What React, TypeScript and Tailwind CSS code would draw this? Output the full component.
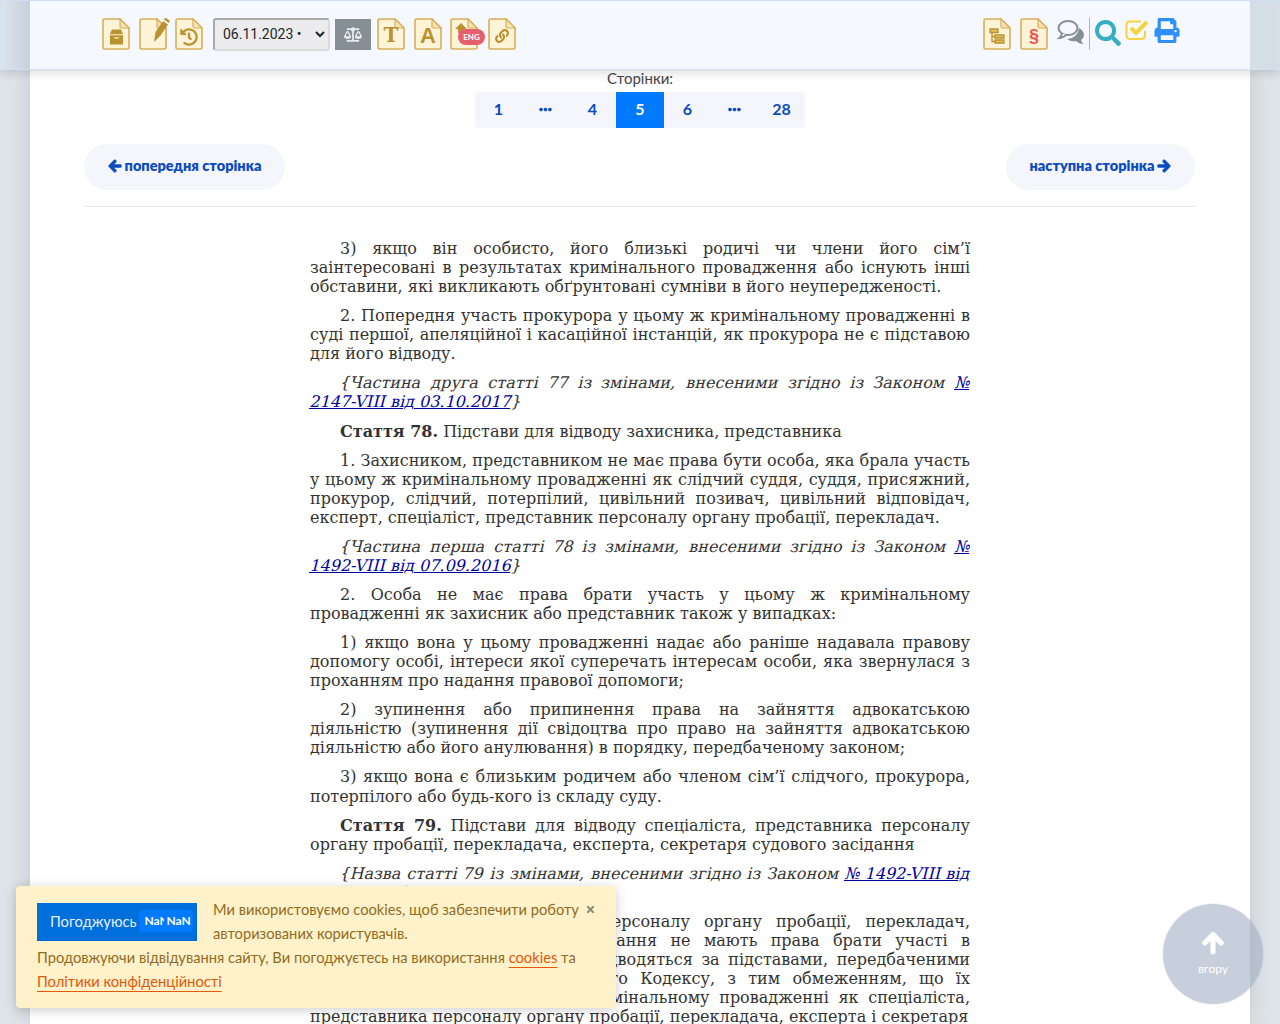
import { Fragment } from "react"
import type { ReactNode } from "react"
import {
  FaArrowLeft,
  FaArrowRight,
  FaArrowUp,
  FaBalanceScale,
  FaEllipsisH,
  FaHistory,
  FaLink,
  FaPrint,
  FaSearch,
  FaTimes,
} from "react-icons/fa"

const pages = ["1", "dots", "4", "5", "6", "dots", "28"]

function DocIcon({ children }: { children?: ReactNode }) {
  return (
    <div className="relative h-[32px] w-[28px] shrink-0">
      <svg viewBox="0 0 28 32" className="absolute inset-0 h-full w-full">
        <path
          d="M1 2.5 Q1 1 2.5 1 H18 L27 10 V29.5 Q27 31 25.5 31 H2.5 Q1 31 1 29.5 Z"
          fill="#fff4d8"
          stroke="#d8ae5b"
          strokeWidth="1.6"
        />
        <path d="M18 1 V8.5 Q18 10 19.5 10 H27 Z" fill="#f6e2b0" stroke="#d8ae5b" strokeWidth="1.2" />
      </svg>
      <div className="absolute inset-0 flex items-center justify-center text-[#bb9230]">{children}</div>
    </div>
  )
}

function Para({ children }: { children: ReactNode }) {
  return <p className="mb-[10px] indent-[30px] text-justify">{children}</p>
}

// the amendment notes use the upright face slanted, words stay separate so justify still works
function Amend({ text, links }: { text: string; links: string[] }) {
  return (
    <p className="mb-[10px] indent-[30px] text-justify">
      {text.split(" ").map((word, i) => (
        <Fragment key={i}>
          <span className="inline-block origin-[50%_65%] skew-x-[-14deg] indent-0">{word}</span>{" "}
        </Fragment>
      ))}
      {links.map((link, i) => (
        <Fragment key={i}>
          <span className="inline-block origin-[50%_65%] skew-x-[-14deg] indent-0 text-[#0000a0] underline">{link}</span>
          {i < links.length - 1 ? " " : ""}
        </Fragment>
      ))}
      <span className="inline-block origin-[50%_65%] skew-x-[-14deg] indent-0">{"}"}</span>
    </p>
  )
}

export default function App() {
  return (
    <div className="relative h-[1024px] overflow-hidden bg-[#dfe4e9] font-['Lato',sans-serif]">
      <header className="relative z-10 flex h-[70px] border border-[#cfe0f7] bg-[#d5dde6] shadow-[0_3px_10px_rgba(0,0,0,0.15)]">
        <div className="w-[29px] bg-gradient-to-r from-[#dde4ec] to-[#c6d1dc]" />
        <div className="flex flex-1 items-center justify-between bg-[#f5f8fe] pb-[2px] pl-[72px] pr-[70px]">
          <div className="flex items-center">
            <DocIcon>
              <svg viewBox="0 0 16 16" className="mt-[6px] h-[16px] w-[15px]" fill="currentColor">
                <path d="M3 0 H13 L15 5 H1 Z" />
                <path d="M1 6 H15 V16 H1 Z M5 8.5 Q8 11.5 11 8.5 L10 8 Q8 9.7 6 8 Z" fillRule="evenodd" />
              </svg>
            </DocIcon>
            <div className="relative ml-[9px]">
              <DocIcon />
              <svg viewBox="0 0 16 24" className="absolute left-[15px] top-0 h-[24px] w-[16px] text-[#bb9230]" fill="currentColor">
                <path d="M0 24 L1.5 14 L9 3 L14 6.5 L6.5 17.5 Z" />
                <path d="M10 1.5 L11 0 Q11.500 -0.300 12 0 L15.500 2.500 Q16 3 15.500 3.500 L14.800 5 Z" />
              </svg>
            </div>
            <div className="ml-[8px]">
              <DocIcon>
                <FaHistory className="mt-[6px] h-[18px] w-[18px]" />
              </DocIcon>
            </div>
            <select
              defaultValue="06.11.2023"
              className="ml-[10px] h-[33px] w-[117px] rounded-[3px] border-2 border-t-[#a9a9a9] border-l-[#a9a9a9] border-r-[#dcdcdc] border-b-[#dcdcdc] bg-[#ececef] pl-[4px] font-['Roboto',sans-serif] text-[14px] text-[#212529]"
            >
              <option value="06.11.2023">06.11.2023 •</option>
            </select>
            <div className="ml-[5px] flex h-[31px] w-[36px] items-center justify-center bg-[#868e96] text-[#e9ecef]">
              <FaBalanceScale className="h-[15px] w-[18px]" />
            </div>
            <div className="ml-[6px]">
              <DocIcon>
                <span className="mt-[2px] font-['DejaVu_Serif',serif] text-[20px] font-bold">T</span>
              </DocIcon>
            </div>
            <div className="ml-[9px]">
              <DocIcon>
                <span className="mt-[2px] font-['Liberation_Sans',sans-serif] text-[22px] font-bold">A</span>
              </DocIcon>
            </div>
            <div className="relative ml-[8px]">
              <DocIcon />
              <svg viewBox="0 0 12 10" className="absolute left-[5px] top-[5px] h-[10px] w-[12px] text-[#bb9230]" fill="currentColor">
                <path d="M6 0 L12 6 H9 V10 H3 V6 H0 Z" />
              </svg>
              <span className="absolute left-[8px] top-[11px] flex h-[16px] w-[27px] items-center justify-center rounded-full bg-[#e4606d] text-[8px] font-bold text-white">
                ENG
              </span>
            </div>
            <div className="ml-[10px]">
              <DocIcon>
                <FaLink className="mt-[3px] h-[14px] w-[14px]" />
              </DocIcon>
            </div>
          </div>
          <div className="flex items-center">
            <DocIcon>
              <svg viewBox="0 0 16 16" className="mt-[4px] h-[16px] w-[16px]" fill="#e3c163" stroke="currentColor" strokeWidth="1.300">
                <path d="M3 4.500 V13.500 H6 M3 8.500 H6" fill="none" />
                <path d="M1 1 H9 V4.500 H1 Z M6 7 H15 V10 H6 Z M6 12 H15 V15 H6 Z" />
              </svg>
            </DocIcon>
            <div className="ml-[9px]">
              <DocIcon>
                <span className="mt-[5px] font-['Liberation_Sans',sans-serif] text-[18px] font-bold text-[#f0524f]">§</span>
              </DocIcon>
            </div>
            <svg viewBox="0 0 28 26" className="mb-[4px] ml-[9px] h-[26px] w-[28px]">
              <path d="M22 9 Q27 12 27 16 Q27 19 24 21 Q25 24 27 25 Q22 25 19 22 Q14 23 10 20 Q20 20 22 9 Z" fill="#868e96" />
              <ellipse cx="11" cy="9" rx="9.500" ry="7" fill="#f5f8fe" stroke="#868e96" strokeWidth="2" />
              <path d="M5 14 Q5 17 2.500 19 Q7 18.500 9 16" fill="#f5f8fe" stroke="#868e96" strokeWidth="2" />
            </svg>
            <div className="ml-[4px] h-[32px] w-px bg-[#adb5bd]" />
            <FaSearch className="mb-[2px] ml-[5px] h-[26px] w-[26px] text-[#36aec1]" />
            <svg viewBox="0 0 25 22" className="mb-[8px] ml-[4px] h-[22px] w-[25px]" fill="none" stroke="#f5d442">
              <path d="M20 12 V16 Q20 20 16 20 H5 Q1.500 20 1.500 16 V6 Q1.500 2.500 5 2.500 H16" strokeWidth="2" />
              <path d="M6 9 L11 14 L22 3" strokeWidth="4" />
            </svg>
            <FaPrint className="mb-[7px] ml-[4px] h-[25px] w-[26px] text-[#2e8fff]" />
          </div>
        </div>
        <div className="w-[29px] bg-[#d5dde6]" />
      </header>

      <main className="mx-[30px] h-[954px] bg-white px-[55px] shadow-[0_0_24px_rgba(0,0,0,0.12)]">
        <div className="flex flex-col items-center">
          <div className="text-[15px] leading-[16px] text-[#444]">Сторінки:</div>
          <div className="mt-[6px] flex h-[36px] overflow-hidden rounded-[4px] bg-[#f4f6fb]">
            {pages.map((page, i) => (
              <div
                key={i}
                className={
                  page === "5"
                    ? "flex w-[48px] items-center justify-center bg-[#007bff] pb-[2px] text-[16px] font-bold text-white"
                    : "flex w-[47px] items-center justify-center pb-[2px] text-[16px] font-bold text-[#0b4cc0]"
                }
              >
                {page === "dots" ? <FaEllipsisH className="h-[13px] w-[13px]" /> : page}
              </div>
            ))}
          </div>
        </div>

        <div className="-ml-px mt-[16px] flex justify-between">
          <a className="flex h-[46px] w-[201px] items-center justify-center gap-[3px] rounded-full bg-[#f4f6fb] pb-[2px] text-[14.500px] font-extrabold text-[#0b4cc0]">
            <FaArrowLeft className="h-[14px] w-[14px] stroke-[40px]" /> попередня сторінка
          </a>
          <a className="flex h-[46px] w-[189px] items-center justify-center gap-[3px] rounded-full bg-[#f4f6fb] pb-[2px] text-[14.500px] font-extrabold text-[#0b4cc0]">
            наступна сторінка <FaArrowRight className="h-[14px] w-[14px] stroke-[40px]" />
          </a>
        </div>
        <hr className="mt-[16px] border-t border-[#e5e5e5]" />

        <article className="mx-auto mt-[32.050px] w-[660px] font-['DejaVu_Serif',serif] text-[16px] leading-[19.060px] text-[#333]">
          <Para>
            3) якщо він особисто, його близькі родичі чи члени його сім’ї заінтересовані в результатах кримінального провадження або існують інші обставини, які викликають обґрунтовані сумніви в його неупередженості.
          </Para>
          <Para>
            2. Попередня участь прокурора у цьому ж кримінальному провадженні в суді першої, апеляційної і касаційної інстанцій, як прокурора не є підставою для його відводу.
          </Para>
          <Amend text="{Частина друга статті 77 із змінами, внесеними згідно із Законом" links={["№", "2147-VIII від 03.10.2017"]} />
          <Para>
            <b>Стаття 78.</b> Підстави для відводу захисника, представника
          </Para>
          <Para>
            1. Захисником, представником не має права бути особа, яка брала участь у цьому ж кримінальному провадженні як слідчий суддя, суддя, присяжний, прокурор, слідчий, потерпілий, цивільний позивач, цивільний відповідач, експерт, спеціаліст, представник персоналу органу пробації, перекладач.
          </Para>
          <Amend text="{Частина перша статті 78 із змінами, внесеними згідно із Законом" links={["№", "1492-VIII від 07.09.2016"]} />
          <Para>
            2. Особа не має права брати участь у цьому ж кримінальному провадженні як захисник або представник також у випадках:
          </Para>
          <Para>
            1) якщо вона у цьому провадженні надає або раніше надавала правову допомогу особі, інтереси якої суперечать інтересам особи, яка звернулася з проханням про надання правової допомоги;
          </Para>
          <Para>
            2) зупинення або припинення права на зайняття адвокатською діяльністю (зупинення дії свідоцтва про право на зайняття адвокатською діяльністю або його анулювання) в порядку, передбаченому законом;
          </Para>
          <Para>
            3) якщо вона є близьким родичем або членом сім’ї слідчого, прокурора, потерпілого або будь-кого із складу суду.
          </Para>
          <Para>
            <b>Стаття 79.</b> Підстави для відводу спеціаліста, представника персоналу органу пробації, перекладача, експерта, секретаря судового засідання
          </Para>
          <Amend text="{Назва статті 79 із змінами, внесеними згідно із Законом" links={["№ 1492-VIII від", "07.09.2016"]} />
          <Para>
            1. Спеціаліст, представник персоналу органу пробації, перекладач, експерт, секретар судового засідання не мають права брати участі в кримінальному провадженні та відводяться за підставами, передбаченими частиною першою статті 77 цього Кодексу, з тим обмеженням, що їх попередня участь у цьому ж кримінальному провадженні як спеціаліста, представника персоналу органу пробації, перекладача, експерта і секретаря
          </Para>
        </article>
      </main>

      <div className="absolute left-[16px] top-[886px] z-20 h-[122px] w-[600px] rounded-[4px] bg-[#fff1c9] pl-[21px] pr-[20px] pt-[12px] text-[14.700px] leading-[24px] text-[#8f6d1f] shadow-[0_2px_12px_rgba(0,0,0,0.2)]">
        <div className="flex items-start">
          <div className="mt-[5px] flex h-[38px] w-[160px] shrink-0 items-center whitespace-nowrap bg-[#006fdc] pb-[3px] pl-[13px] text-[14.700px] text-[#e6f0fb]">
            Погоджуюсь
            <span className="ml-[3px] flex h-[22px] items-center rounded-[4px] bg-[#007bff] pl-[5px] pr-[2px] text-[12px] font-bold text-white">
              <span className="w-[20px] overflow-hidden">NaN</span>
              <span className="ml-[2px]">NaN</span>
            </span>
          </div>
          <div className="-mt-[1px] ml-[16px] flex-1">Ми використовуємо cookies, щоб забезпечити роботу авторизованих користувачів.</div>
          <FaTimes className="mt-[6px] h-[11px] w-[11px] shrink-0 text-[#8a8a7a]" />
        </div>
        <div>
          Продовжуючи відвідування сайту, Ви погоджуєтесь на використання{" "}
          <span className="text-[#e2590b] underline underline-offset-[4px]">cookies</span> та
          <br />
          <span className="text-[#e2590b] underline underline-offset-[4px]">Політики конфіденційності</span>
        </div>
      </div>

      <div className="absolute left-[1163px] top-[904px] z-20 flex h-[100px] w-[100px] flex-col items-center justify-center rounded-full bg-[rgba(160,172,195,0.58)] text-white shadow-[0_0_2px_rgba(0,0,0,0.15)]">
        <FaArrowUp className="h-[24px] w-[24px] stroke-[30px]" />
        <span className="mt-[6px] text-[12px] leading-[16px]">вгору</span>
      </div>
    </div>
  )
}
